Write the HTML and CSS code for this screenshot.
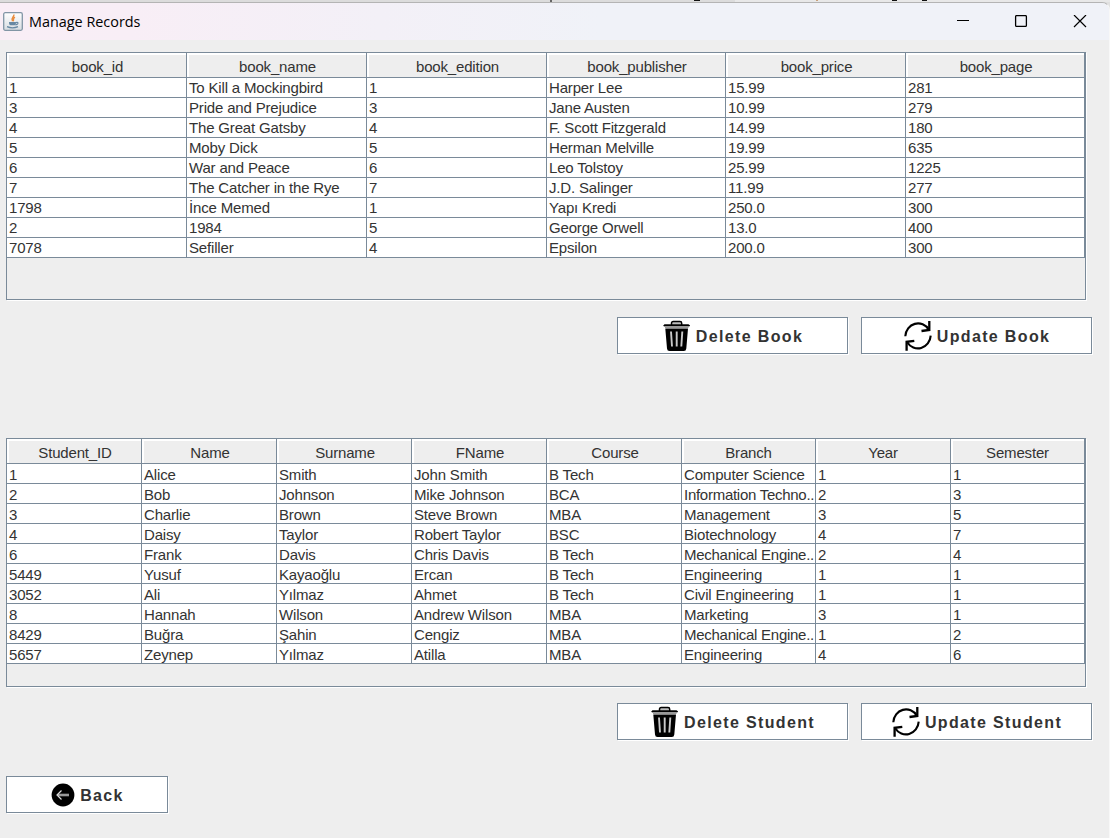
FILE: index.html
```html
<!DOCTYPE html>
<html lang="en">
<head>
<meta charset="utf-8">
<title>Manage Records</title>
<link rel="stylesheet" href="styles.css">
</head>
<body>
<svg class="defs" width="0" height="0" aria-hidden="true">
  <symbol id="trash" viewBox="0 0 28 32">
    <path d="M8.5 5V3.2Q8.5 1.5 10.2 1.5H17Q18.7 1.5 18.7 3.2V5" fill="#bbb" stroke="#000" stroke-width="1.5"/>
    <path d="M1.5 4.7H25.5Q26.5 4.7 26.5 6H.8Q.8 4.7 1.5 4.7Z" fill="#000" stroke="#000" stroke-width=".8"/>
    <path d="M2 7.5H25.5" stroke="#999" stroke-width="1"/>
    <path d="M2.3 8.6H25L23.3 28.5Q23.1 31 20.8 31H6.5Q4.2 31 4 28.5Z" fill="#000"/>
    <path d="M8 11.5L9 26.5M13.7 11.5V26.5M19.3 11.5L18.3 26.5" stroke="#c9c9c9" stroke-width="1.9"/>
  </symbol>
  <symbol id="refresh" viewBox="0 0 28 32">
    <g fill="none" stroke="#000">
      <path d="M1.3 16.2A12.8 13.6 0 0 1 24.8 9.6" stroke-width="2.1"/>
      <path d="M26.7 15.6A12.8 13.6 0 0 1 3.2 22.2" stroke-width="2.1"/>
      <path d="M25.3 1V9.9L17.5 11M2.6 30.8V21.8L10.3 20.8" stroke-width="2.3"/>
    </g>
  </symbol>
</svg>
<div class="backdrop"><i class="tick tick-a"></i><i class="tick tick-b"></i><i class="tick tick-c"></i><i class="tick tick-d"></i><i class="tick tick-e"></i></div>
<div class="window">
  <header class="titlebar">
    <svg class="java" width="20" height="19" viewBox="0 0 20 19">
      <defs><linearGradient id="jg" x1="0" y1="0" x2="0" y2="1"><stop offset="0" stop-color="#fff"/><stop offset="1" stop-color="#d8dde2"/></linearGradient></defs>
      <rect x=".7" y=".7" width="18.6" height="17.6" rx="1.5" fill="url(#jg)" stroke="#8195a5" stroke-width="1.3"/>
      <path d="M10.8 2.5C11.8 4.8 7.3 5.8 9.5 9.2M12 5.2C9.6 6.3 10.8 7.4 10.3 9.2" fill="none" stroke="#e88b3c" stroke-width="1.4"/>
      <path d="M6 10H13Q13 13.2 11.5 13.2H7.5Q6 13.2 6 10Z" fill="#6788a3"/>
      <path d="M13 10.5Q15.5 10 14.8 11.6Q14.2 12.7 12.4 12.8M4 14.6Q9.5 17 15 14.6" fill="none" stroke="#6788a3" stroke-width="1.2"/>
    </svg>
    <span class="title">Manage Records</span>
    <svg class="controls" width="132" height="14" viewBox="0 0 132 14" fill="none" stroke="#000">
      <path d="M0 5.5H12" stroke-width="1"/>
      <rect x="58.6" y=".6" width="10.8" height="10.8" rx="1" stroke-width="1.3"/>
      <path d="M117 0L129 12M129 0L117 12" stroke-width="1.2"/>
    </svg>
  </header>
  <main class="content">
    <section class="pane books">
      <table class="grid">
        <colgroup><col class="w180"><col class="w180"><col class="w180"><col class="w179"><col class="w180"><col class="w179"></colgroup>
        <thead><tr><th>book_id</th><th>book_name</th><th>book_edition</th><th>book_publisher</th><th>book_price</th><th>book_page</th></tr></thead>
        <tbody>
          <tr><td>1</td><td>To Kill a Mockingbird</td><td>1</td><td>Harper Lee</td><td>15.99</td><td>281</td></tr>
          <tr><td>3</td><td>Pride and Prejudice</td><td>3</td><td>Jane Austen</td><td>10.99</td><td>279</td></tr>
          <tr><td>4</td><td>The Great Gatsby</td><td>4</td><td>F. Scott Fitzgerald</td><td>14.99</td><td>180</td></tr>
          <tr><td>5</td><td>Moby Dick</td><td>5</td><td>Herman Melville</td><td>19.99</td><td>635</td></tr>
          <tr><td>6</td><td>War and Peace</td><td>6</td><td>Leo Tolstoy</td><td>25.99</td><td>1225</td></tr>
          <tr><td>7</td><td>The Catcher in the Rye</td><td>7</td><td>J.D. Salinger</td><td>11.99</td><td>277</td></tr>
          <tr><td>1798</td><td>İnce Memed</td><td>1</td><td>Yapı Kredi</td><td>250.0</td><td>300</td></tr>
          <tr><td>2</td><td>1984</td><td>5</td><td>George Orwell</td><td>13.0</td><td>400</td></tr>
          <tr><td>7078</td><td>Sefiller</td><td>4</td><td>Epsilon</td><td>200.0</td><td>300</td></tr>
        </tbody>
      </table>
    </section>
    <div class="actions">
      <button class="btn"><svg width="28" height="32"><use href="#trash"/></svg><span>Delete Book</span></button>
      <button class="btn"><svg width="28" height="32"><use href="#refresh"/></svg><span>Update Book</span></button>
    </div>
    <section class="pane students">
      <table class="grid">
        <colgroup><col class="w135"><col class="w135"><col class="w135"><col class="w135"><col class="w135"><col class="w134"><col class="w135"><col class="w134"></colgroup>
        <thead><tr><th>Student_ID</th><th>Name</th><th>Surname</th><th>FName</th><th>Course</th><th>Branch</th><th>Year</th><th>Semester</th></tr></thead>
        <tbody>
          <tr><td>1</td><td>Alice</td><td>Smith</td><td>John Smith</td><td>B Tech</td><td>Computer Science</td><td>1</td><td>1</td></tr>
          <tr><td>2</td><td>Bob</td><td>Johnson</td><td>Mike Johnson</td><td>BCA</td><td class="tight">Information Techno..</td><td>2</td><td>3</td></tr>
          <tr><td>3</td><td>Charlie</td><td>Brown</td><td>Steve Brown</td><td>MBA</td><td>Management</td><td>3</td><td>5</td></tr>
          <tr><td>4</td><td>Daisy</td><td>Taylor</td><td>Robert Taylor</td><td>BSC</td><td>Biotechnology</td><td>4</td><td>7</td></tr>
          <tr><td>6</td><td>Frank</td><td>Davis</td><td>Chris Davis</td><td>B Tech</td><td class="tight">Mechanical Engine..</td><td>2</td><td>4</td></tr>
          <tr><td>5449</td><td>Yusuf</td><td>Kayaoğlu</td><td>Ercan</td><td>B Tech</td><td>Engineering</td><td>1</td><td>1</td></tr>
          <tr><td>3052</td><td>Ali</td><td>Yılmaz</td><td>Ahmet</td><td>B Tech</td><td>Civil Engineering</td><td>1</td><td>1</td></tr>
          <tr><td>8</td><td>Hannah</td><td>Wilson</td><td>Andrew Wilson</td><td>MBA</td><td>Marketing</td><td>3</td><td>1</td></tr>
          <tr><td>8429</td><td>Buğra</td><td>Şahin</td><td>Cengiz</td><td>MBA</td><td class="tight">Mechanical Engine..</td><td>1</td><td>2</td></tr>
          <tr><td>5657</td><td>Zeynep</td><td>Yılmaz</td><td>Atilla</td><td>MBA</td><td>Engineering</td><td>4</td><td>6</td></tr>
        </tbody>
      </table>
    </section>
    <div class="actions student-actions">
      <button class="btn"><svg width="28" height="32"><use href="#trash"/></svg><span>Delete Student</span></button>
      <button class="btn"><svg width="28" height="32"><use href="#refresh"/></svg><span>Update Student</span></button>
    </div>
    <button class="btn back"><svg width="24" height="24" viewBox="0 0 24 24"><circle cx="12" cy="12" r="11.4" fill="#000"/><path d="M18 12H7" stroke="#999" stroke-width="2.6"/><path d="M10.5 7.5L6 12L10.5 16.5" fill="none" stroke="#ddd" stroke-width="1.2"/></svg><span>Back</span></button>
  </main>
</div>
</body>
</html>
```
FILE: styles.css
```css
* { box-sizing: border-box; }
body { margin: 0; width: 1110px; height: 838px; overflow: hidden; background: #e0e0e0; font-family: "Liberation Sans", Arial, sans-serif; color: #333; }
.defs { position: absolute; }
.backdrop { position: relative; height: 2px; background: linear-gradient(90deg, #dcdcdc 735px, #e8e8e8 735px); }
.tick { position: absolute; top: 0; height: 1px; background: #111; }
.tick-a { left: 550px; width: 2px; height: 2px; background: #666; }
.tick-b { left: 694px; width: 6px; }
.tick-c { left: 816px; width: 2px; background: #c9a27c; }
.tick-d { left: 892px; width: 5px; }
.tick-e { left: 922px; width: 5px; }
.window { height: 836px; background: #eee; border-top: 1px solid #b4b4b4; border-right: 1px solid #f8f8f8; border-radius: 0 8px 0 0; overflow: hidden; }
.titlebar { display: flex; align-items: center; height: 37px; padding: 0 20px 0 3px; background: linear-gradient(90deg, #f9eef6 0, #f8eef6 130px, #f3f0f7 380px, #f0f2f8 600px, #f0f2f8 100%); }
.title { margin-left: 6px; font: 14.4px "Open Sans", "Noto Sans", sans-serif; color: #000; }
.controls { margin-left: auto; }
.content { padding: 12px 0 0 6px; }
.pane { width: 1080px; border: 1px solid #7a8a99; box-shadow: 1px 1px 0 #fff; }
.books { height: 248px; }
.students { height: 249px; margin-top: 84px; }
.grid { width: 1078px; table-layout: fixed; border-collapse: separate; border-spacing: 0; font-size: 15px; letter-spacing: -0.17px; }
.w180 { width: 180px; }
.w179 { width: 179px; }
.w135 { width: 135px; }
.w134 { width: 134px; }
th, td { border-right: 1px solid #7a8a99; border-bottom: 1px solid #7a8a99; white-space: nowrap; overflow: hidden; }
th { height: 25px; padding: 3px 0 0 2px; font-weight: normal; line-height: 20px; background: #eee; box-shadow: inset 2px 2px 0 #fff; }
td { height: 20px; padding: 0 0 0 2px; line-height: 19px; background: #fff; }
.students th:nth-child(n+6) { padding-left: 0; }
.students td { padding-top: 2px; line-height: 17px; }
.students .tight { letter-spacing: -0.27px; }
.actions { display: flex; gap: 13px; margin: 17px 0 0 611px; }
.student-actions { margin-top: 16px; }
.btn { display: flex; align-items: center; justify-content: center; gap: 5px; width: 231px; height: 37px; padding: 0 0 0 1px; border: 1px solid #7a8a99; background: #fff; box-shadow: 1px 1px 0 #fff; font: bold 16px "Liberation Sans", Arial, sans-serif; letter-spacing: 1.35px; color: #333; }
.btn span { padding-top: 2px; }
.back { width: 162px; margin-top: 36px; }
```
